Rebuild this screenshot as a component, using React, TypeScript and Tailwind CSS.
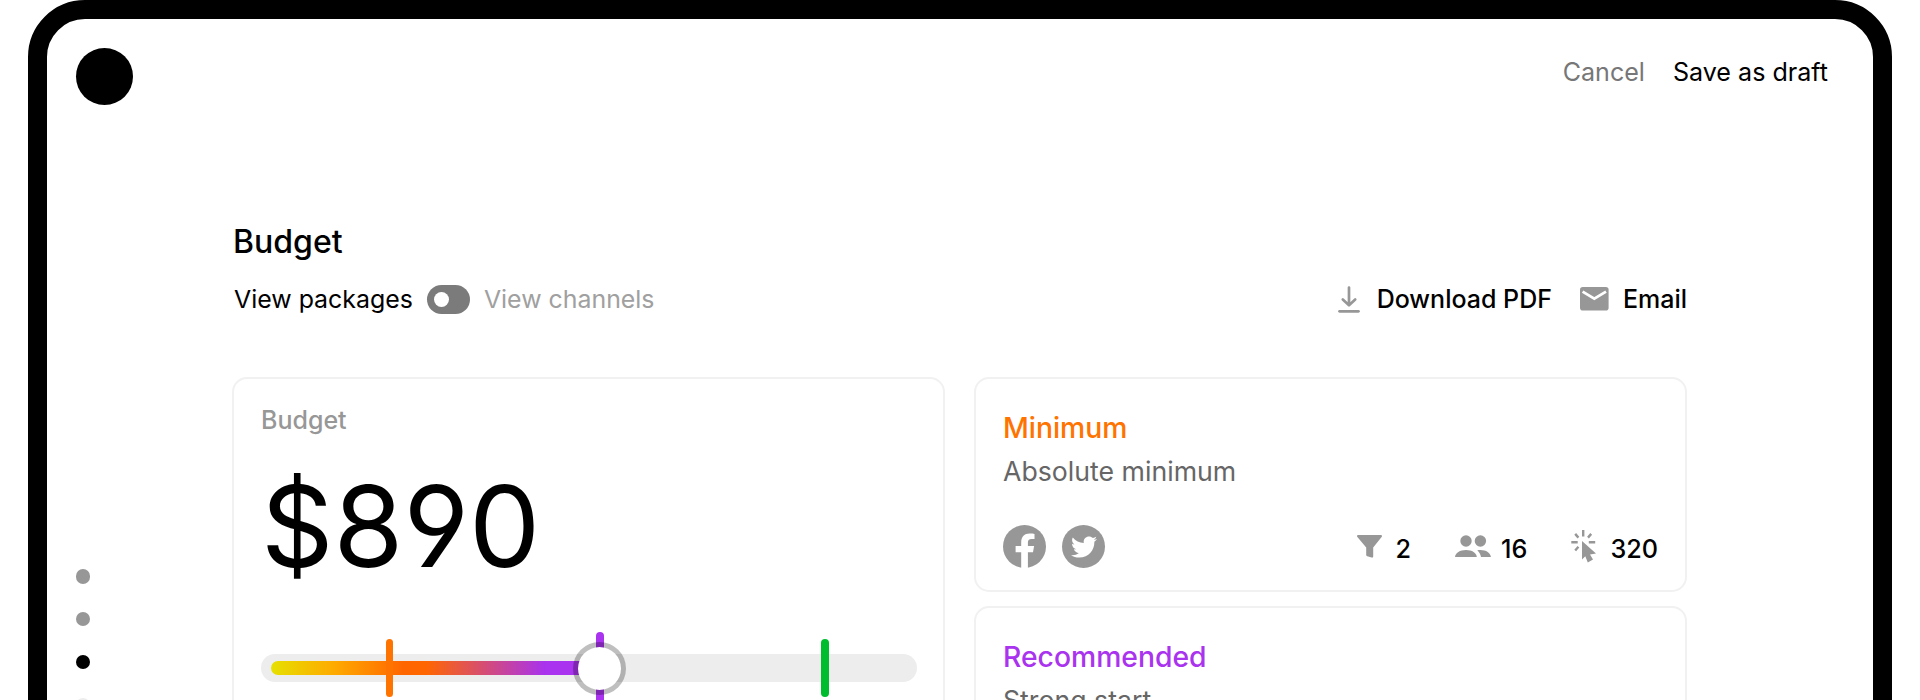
import React from "react";
import { FaTwitter } from "react-icons/fa";

function FacebookIcon() {
  return (
    <svg className="h-[43px] w-[43px]" viewBox="0 0 43 43">
      <circle cx="21.5" cy="21.5" r="21.5" fill="#979797" />
      <path
        fill="#fff"
        d="M18.200 43V27.200h-5.600v-6.200h5.600v-3.600c0-5.800 3.300-8.900 8.400-8.900 2 0 3.800.2 4.900.4v5.200h-2.900c-2.800 0-3.700 1.400-3.700 3.300v3.600h6.200l-1.100 6.200h-5.100V43z"
      />
    </svg>
  );
}

function TwitterIcon() {
  return (
    <span className="flex h-[43px] w-[43px] items-center justify-center rounded-full bg-[#979797]">
      <FaTwitter className="h-[26px] w-[26px] text-white" />
    </span>
  );
}

function DownloadIcon() {
  return (
    <svg className="h-[27px] w-[22px]" viewBox="0 0 22 27" fill="none" stroke="#979797" strokeLinecap="round">
      <path strokeWidth="2.7" strokeLinejoin="round" d="M11 1.500V18M4.800 13.500L11 19.300l6.200-5.800" />
      <path strokeWidth="2.7" d="M1.500 25.300h19" />
    </svg>
  );
}

function MailIcon() {
  return (
    <svg className="h-6 w-[29px]" viewBox="0 0 29 24">
      <rect width="28.600" height="23.600" rx="2.800" fill="#979797" />
      <path fill="none" stroke="#fff" strokeWidth="2.800" d="M2.600 4.600L14.300 11.700 26 4.600" />
    </svg>
  );
}

function FunnelIcon() {
  return (
    <svg className="h-[23px] w-[25px]" viewBox="0 0 25 23" fill="#979797">
      <path d="M1.200 0h22.600c1.100 0 1.500 1.200.8 2.100L16.200 12.600v8.900c0 .9-.7 1.300-1.500 1.100l-4.500-1.300c-.6-.2-1-.6-1-1.200v-7.500L.4 2.100C-.3 1.200.1 0 1.200 0z" />
    </svg>
  );
}

function PeopleIcon() {
  return (
    <svg className="h-[23px] w-[36px]" viewBox="0 0 36 23" fill="#979797">
      <circle cx="11" cy="6" r="5.700" />
      <circle cx="25.400" cy="6" r="5.700" />
      <path d="M0 22c.3-4.200 5-7 11-7s10.500 2.800 10.800 7z" />
      <path d="M22.300 15.200c1-.2 2-.2 3.100-.2 5.800 0 10.100 2.800 10.500 7H26c-.5-2.700-1.800-4.900-3.700-6.800z" />
    </svg>
  );
}

function ClickIcon() {
  return (
    <svg className="h-[33px] w-[25px]" viewBox="0 0 25 33">
      <path
        fill="none"
        stroke="#979797"
        strokeWidth="2.400"
        d="M12.200 0v6.500M4.200 3.900l3.200 3.700M20.200 3.900l-3.200 3.700M.3 12.200h6.400M17.800 12.200h6.400M4.200 20.500l3.200-3.700"
      />
      <path fill="#979797" d="M11 11L25 23.500l-6 .9 3 5.200-5.200 2.900-2.500-6.200-3.300 3.100z" />
    </svg>
  );
}

function PackageCard({ title, color, text }: { title: string; color: string; text: string }) {
  return (
    <section className="flex h-[214.500px] shrink-0 flex-col rounded-[15px] border-2 border-[#f1f1f1] px-[27px] pt-[29px]">
      <h2 className={`text-[28.300px] leading-[40px] font-medium ${color}`}>{title}</h2>
      <p className="mt-[3px] text-[26.700px] leading-10 text-[#666]">{text}</p>
      <div className="mt-[34px] flex items-center">
        <div className="flex gap-4">
          <FacebookIcon />
          <TwitterIcon />
        </div>
        <div className="ml-auto flex items-center text-[25.200px] leading-8 font-medium">
          <FunnelIcon />
          <span className="mt-[4px] ml-[14px]">2</span>
          <span className="ml-[44px]">
            <PeopleIcon />
          </span>
          <span className="mt-[4px] ml-[10px]">16</span>
          <span className="ml-[44px]">
            <ClickIcon />
          </span>
          <span className="mt-[4px] ml-[14px]">320</span>
        </div>
      </div>
    </section>
  );
}

function BudgetSlider() {
  return (
    <div className="relative mt-[56px] h-[28px] w-[656px] rounded-full bg-[#ededed] py-[7px] pl-[10px]">
      <div className="h-[14px] w-[330px] rounded-l-full bg-[linear-gradient(90deg,#e6e000_0%,#ffa800_20%,#ff6600_40%,#ff6600_47%,#a933ee_83%,#a933ee_100%)]" />
      <span className="absolute -top-[15px] left-[124.500px] h-[58px] w-[7.500px] rounded-full bg-[#ff7300]" />
      <span className="absolute -top-[22px] left-[335px] h-[72px] w-[7.500px] rounded-full bg-[#a933ee]" />
      <span className="absolute -top-[15px] left-[560px] h-[58px] w-[7.500px] rounded-full bg-[#00bd2f]" />
      <span className="absolute -top-[12px] left-[312px] h-[53px] w-[53px] rounded-full border-[5px] border-black/25 bg-white bg-clip-padding" />
    </div>
  );
}

export default function App() {
  return (
    <div className="h-[700px] overflow-hidden bg-white px-7 font-['Inter',sans-serif] text-black">
      <div className="flex h-[900px] flex-col rounded-[57px] border-[19px] border-black pl-[28.500px]">
        <header className="flex h-[86px] items-start pt-[29px] pr-[45px]">
          <div className="h-[57px] w-[57px] rounded-full bg-black" />
          <nav className="ml-auto flex gap-7 pt-[8px] text-[25.100px] leading-8">
            <span className="text-[#777]">Cancel</span>
            <span>Save as draft</span>
          </nav>
        </header>
        <div className="flex">
          <aside className="flex w-[156.500px] flex-col gap-[28.400px] pt-[464px]">
            <span className="h-[14.500px] w-[14.500px] rounded-full bg-[#979797]" />
            <span className="h-[14.500px] w-[14.500px] rounded-full bg-[#979797]" />
            <span className="h-[14.500px] w-[14.500px] rounded-full bg-black" />
            <span className="h-[14.500px] w-[14.500px] rounded-full bg-[#ededed]" />
          </aside>
          <main className="w-[1455px] pt-[117px]">
            <h1 className="pl-[1px] text-[32px] leading-10 font-medium">Budget</h1>
            <div className="mt-[21px] flex items-center">
              <span className="pl-[2px] text-[24.900px] leading-8">View packages</span>
              <span className="ml-[14px] flex h-[29px] w-[43px] items-center rounded-full bg-[#7b7b7b] pl-[7px]">
                <span className="h-[15px] w-[15px] rounded-full bg-white" />
              </span>
              <span className="ml-[14px] text-[24.900px] leading-8 text-[#a0a0a0]">View channels</span>
              <div className="ml-auto flex items-center text-[25px] leading-8 font-medium">
                <DownloadIcon />
                <span className="ml-[17px]">Download PDF</span>
                <span className="mr-[14px] ml-[28px]">
                  <MailIcon />
                </span>
                <span>Email</span>
              </div>
            </div>
            <div className="mt-[62px] grid grid-cols-2 gap-[29px]">
              <section className="h-[400px] rounded-[15px] border-2 border-[#f1f1f1] px-[27px] pt-[25px]">
                <h2 className="text-[25px] leading-8 font-medium text-[#979797]">Budget</h2>
                <p className="mt-[18px] text-[113px] leading-[144px] [font-feature-settings:'cv04']">$890</p>
                <BudgetSlider />
              </section>
              <div className="flex flex-col gap-[14px]">
                <PackageCard title="Minimum" color="text-[#ff7300]" text="Absolute minimum" />
                <PackageCard title="Recommended" color="text-[#a933ee]" text="Strong start" />
              </div>
            </div>
          </main>
        </div>
      </div>
    </div>
  );
}
